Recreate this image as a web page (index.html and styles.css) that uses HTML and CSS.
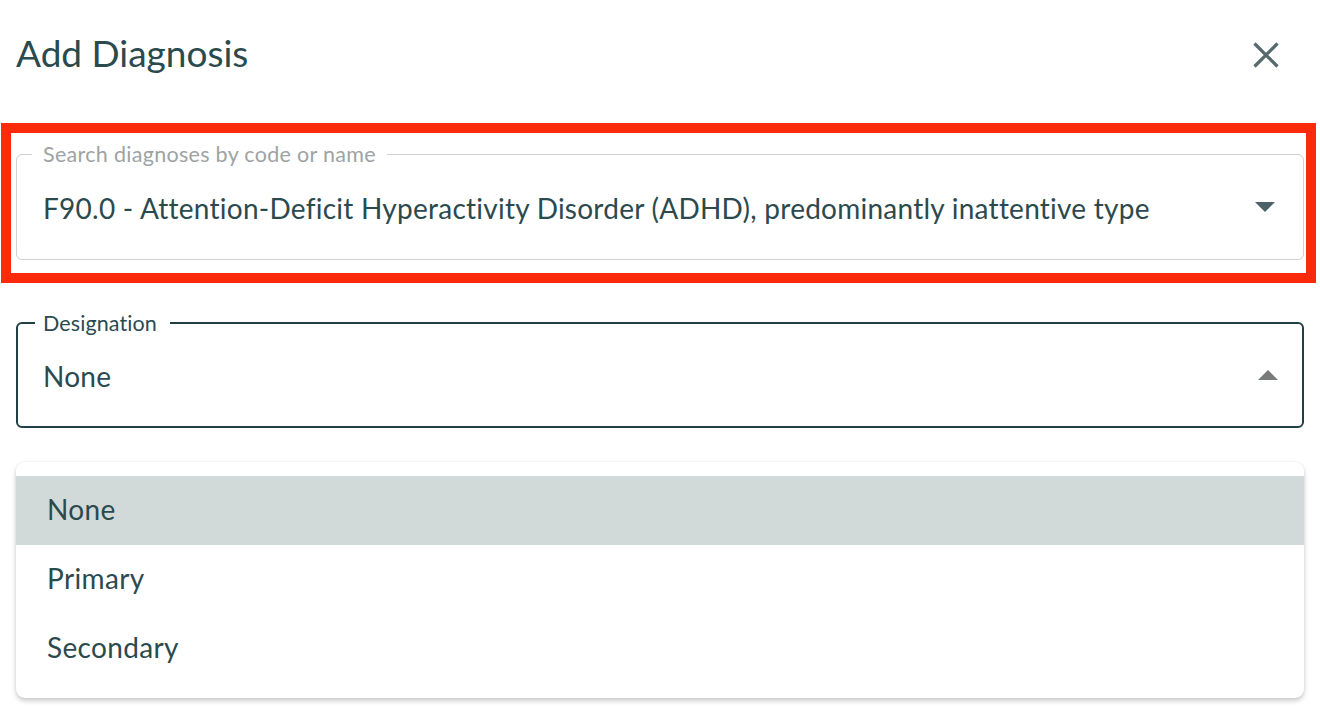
FILE: index.html
```html
<!DOCTYPE html>
<html lang="en">
<head>
<meta charset="utf-8">
<title>Add Diagnosis</title>
<link rel="stylesheet" href="styles.css">
</head>
<body>
<div class="dialog">
  <header class="header">
    <h1 class="title">Add Diagnosis</h1>
    <button class="close" aria-label="Close">
      <svg viewBox="0 0 26 26" width="26" height="26"><path d="M1.5 1.5L24.5 24.5M24.5 1.5L1.5 24.5" stroke="#566a6c" stroke-width="3.2" fill="none"/></svg>
    </button>
  </header>

  <div class="highlight">
    <fieldset class="field field-search">
      <legend class="label label-search">Search diagnoses by code or name</legend>
      <div class="control">
        <span class="value">F90.0 - Attention-Deficit Hyperactivity Disorder (ADHD), predominantly inattentive type</span>
        <svg class="arrow" viewBox="0 0 20 10" width="20" height="10"><path d="M0 0H20L10 10Z" fill="#4d6266"/></svg>
      </div>
    </fieldset>
  </div>

  <fieldset class="field field-designation">
    <legend class="label label-designation">Designation</legend>
    <div class="control">
      <span class="value">None</span>
      <svg class="arrow arrow-up" viewBox="0 0 20 10" width="20" height="10"><path d="M0 10H20L10 0Z" fill="#777b7b"/></svg>
    </div>
  </fieldset>

  <ul class="menu">
    <li class="option selected">None</li>
    <li class="option">Primary</li>
    <li class="option">Secondary</li>
  </ul>
</div>
</body>
</html>
```

FILE: styles.css
```css
* { box-sizing: border-box; }

html, body {
  margin: 0;
  padding: 0;
  background: #ffffff;
}

body {
  font-family: Lato, "Open Sans", "Liberation Sans", sans-serif;
  color: #2b4a4d;
  width: 1320px;
  height: 710px;
  overflow: hidden;
}

.header {
  display: flex;
  align-items: center;
  justify-content: space-between;
  height: 123px;
  padding: 0 41px 18px 16px;
}

.title {
  margin: 0;
  font-size: 37px;
  font-weight: 400;
  line-height: 44px;
  color: #2b4a4d;
  letter-spacing: 0;
}

.close {
  border: 0;
  background: transparent;
  padding: 0;
  width: 26px;
  height: 26px;
  display: flex;
  margin-top: 4px;
}

.highlight {
  margin-left: 1px;
  width: 1315px;
  border: 10px solid #fa2a0a;
  padding: 11px 2px 13px 5px;
}

.field {
  margin: 0;
  padding: 0;
  min-width: 0;
  border-radius: 6px;
}

.field-search {
  border: 1px solid #cdd1d1;
}

.field-designation {
  margin: 30px 16px 0 16px;
  border: 2px solid #1f3f45;
}

.label {
  font-size: 21.5px;
  line-height: 20px;
  letter-spacing: 0.1px;
  white-space: nowrap;
}

.label-search {
  margin-left: 15px;
  padding: 0 11px;
  color: #9da3a3;
  letter-spacing: 0.3px;
}

.label-designation {
  margin-left: 17px;
  padding: 0 13px 0 8px;
  color: #2b4a4d;
}

.control {
  display: flex;
  align-items: center;
  justify-content: space-between;
  height: 95px;
  padding: 0 28px 8px 26px;
}

.control .arrow {
  margin-top: -1px;
}

.field-designation .control {
  height: 93px;
  padding: 0 24px 8px 25px;
}

.value {
  font-size: 28px;
  line-height: 32px;
  letter-spacing: 0.25px;
  color: #2b4a4d;
  white-space: nowrap;
}

.arrow { display: block; flex: none; }

.menu {
  list-style: none;
  margin: 34px 16px 0 16px;
  padding: 14px 0 15px 0;
  background: #ffffff;
  border-radius: 9px;
  box-shadow: 0 3px 5px rgba(0, 0, 0, 0.2), 0 0 3px rgba(0, 0, 0, 0.06);
}

.option {
  display: flex;
  align-items: center;
  height: 69px;
  padding: 0 0 3px 31px;
  font-size: 28px;
  letter-spacing: 0.35px;
  color: #2b4a4d;
}

.option.selected {
  background: #d2d9d9;
}
```
